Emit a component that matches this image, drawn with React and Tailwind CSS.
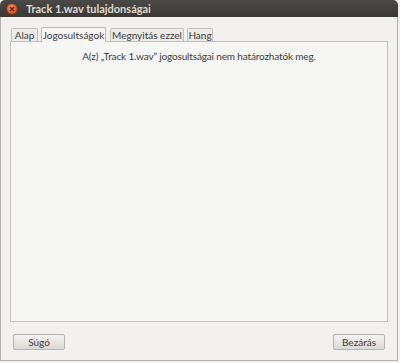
import React from 'react';

const tabs = [
  { label: 'Alap', w: 'w-[27px]' },
  { label: 'Jogosultságok', w: 'w-[65px]' },
  { label: 'Megnyitás ezzel', w: 'w-[74px]' },
  { label: 'Hang', w: 'w-[26px]' },
];

const App = () => {
  const active = 1;

  return (
    <div className="w-[400px] h-[363px] bg-[#f2f1f0] text-[#3c3c3c] text-[10px] font-['Lato',sans-serif] flex flex-col whitespace-nowrap">
      {/* Title bar */}
      <div className="h-[17px] mr-[2px] rounded-t-[5px] bg-gradient-to-b from-[#4a4945] to-[#3a3935] flex items-center pl-[6px] gap-[8px]">
        <div className="w-[12px] h-[12px] rounded-full bg-[radial-gradient(circle_at_40%_35%,#f79a6e,#e2541f_60%,#b8401a)] border border-[#7a3418] flex items-center justify-center">
          <svg width="6" height="6" viewBox="0 0 6 6">
            <path d="M1 1L5 5M5 1L1 5" stroke="#5a2410" strokeWidth="1.2" />
          </svg>
        </div>
        <span className="text-[11px] font-bold text-[#dfdbd2] leading-none">Track 1.wav tulajdonságai</span>
      </div>

      {/* Window body */}
      <div className="flex-1 mr-[2px] mb-[2px] border-x border-b border-[#b5b2ad] flex flex-col">
        {/* Tabs */}
        <div className="flex items-end pl-[10px] pt-[9px] h-[24px]">
          {tabs.map((tab, i) =>
            i === active ? (
              <div
                key={tab.label}
                className={`${tab.w} h-[15px] mr-[4px] border border-b-0 border-[#f0a58a] rounded-t-[2px] bg-[#f7f6f5] flex items-center justify-center leading-[13px] -mb-px relative z-10`}
              >
                {tab.label}
              </div>
            ) : (
              <div
                key={tab.label}
                className={`${tab.w} h-[13px] border border-b-0 border-[#c4c1bb] rounded-t-[2px] bg-[#ecebe9] flex items-center justify-center leading-[12px] mr-[3px]`}
              >
                {tab.label}
              </div>
            )
          )}
        </div>

        {/* Panel */}
        <div className="mx-[9px] h-[281px] border border-[#c4c1bb] bg-[#f6f6f5] flex justify-center pt-[9px]">
          <p className="leading-none text-[10px] tracking-[-0.15px]">A(z) „Track 1.wav” jogosultságai nem határozhatók meg.</p>
        </div>

        {/* Buttons */}
        <div className="flex justify-between px-[12px] mt-[12px]">
          <button className="w-[52px] h-[16px] rounded-[2px] border border-[#b8b5b0] bg-gradient-to-b from-[#f4f3f2] to-[#dcdad7] leading-none text-[10px]">
            Súgó
          </button>
          <button className="w-[52px] h-[16px] rounded-[2px] border border-[#b8b5b0] bg-gradient-to-b from-[#f4f3f2] to-[#dcdad7] leading-none text-[10px]">
            Bezárás
          </button>
        </div>
      </div>
    </div>
  );
};

export default App;
